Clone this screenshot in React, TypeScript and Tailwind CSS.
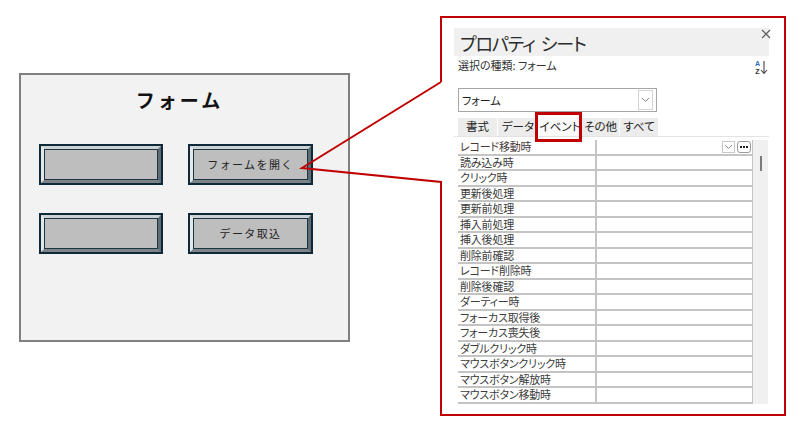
const events = [
  "レコード移動時",
  "読み込み時",
  "クリック時",
  "更新後処理",
  "更新前処理",
  "挿入前処理",
  "挿入後処理",
  "削除前確認",
  "レコード削除時",
  "削除後確認",
  "ダーティー時",
  "フォーカス取得後",
  "フォーカス喪失後",
  "ダブルクリック時",
  "マウスボタンクリック時",
  "マウスボタン解放時",
  "マウスボタン移動時",
];

const tabs = [
  { label: "書式", w: "w-[39px]" },
  { label: "データ", w: "w-[40px]" },
  { label: "イベント", w: "w-[42px]" },
  { label: "その他", w: "w-[37px]" },
  { label: "すべて", w: "w-[38px]" },
];

const Chevron = () => (
  <svg width="9" height="6" viewBox="0 0 9 6">
    <path d="M1 1 L4.5 4.5 L8 1" fill="none" stroke="#8a8a8a" strokeWidth="1" />
  </svg>
);

const BevelButton = ({ label }: { label?: string }) => (
  <div className="h-[41px] border-2 border-[#0e2a3a]">
    <div className="h-full border-[3px] border-t-[#cdd2d4] border-l-[#e6e8e8] border-r-[#5f6b70] border-b-[#7d8386]">
      <div className="h-full border border-[#1b3545] bg-[#bebebe] flex items-center justify-center text-[11px] leading-none tracking-[1.4px] text-[#222]">
        {label}
      </div>
    </div>
  </div>
);

const FormPanel = () => (
  <div className="ml-[19px] mt-[73px] w-[331px] h-[269px] border-2 border-[#808080] bg-[#f2f2f2]">
    <div className="pt-[13px] pr-[10px] h-[37px] text-center text-[19px] leading-[24px] font-bold tracking-[3px] text-[#111]">
      フォーム
    </div>
    <div className="grid grid-cols-[124px_125px] gap-x-[25px] gap-y-[28px] pl-[18px] mt-[32px]">
      <BevelButton />
      <BevelButton label="フォームを開く" />
      <BevelButton />
      <BevelButton label="データ取込" />
    </div>
  </div>
);

const PropertySheet = () => (
  <div className="relative w-[315px] h-[375px] bg-white [font-feature-settings:'palt'] whitespace-nowrap">
    {/* title */}
    <div className="h-[28px] bg-[#f0f0f0] pl-[6px] pt-[2px] flex gap-[6px] text-[18px] leading-[26px] tracking-[-1.1px] text-[#2b2b2b]">
      <span>プロパティ</span>
      <span>シート</span>
    </div>
    <svg className="absolute right-[-2px] top-[1px]" width="10" height="10" viewBox="0 0 10 10">
      <path d="M1 1 L9 9 M9 1 L1 9" stroke="#555" strokeWidth="1.1" />
    </svg>

    <div className="h-[32px] flex justify-between pl-[4px] pr-[1px] pt-[3px]">
      <span className="text-[11px] leading-[13px] text-[#333]">選択の種類: フォーム</span>
      <div className="flex items-start mt-[1px]">
        <div className="flex flex-col items-center font-['Liberation_Sans',sans-serif] text-[7px] leading-[8px] font-bold">
          <span className="text-[#2c6cc7]">A</span>
          <span className="text-[#333]">Z</span>
        </div>
        <svg width="8" height="15" viewBox="0 0 8 15">
          <path d="M4 1 L4 13 M1 10 L4 13.5 L7 10" fill="none" stroke="#444" strokeWidth="1.1" />
        </svg>
      </div>
    </div>

    {/* combo */}
    <div className="ml-[4px] w-[199px] h-[24px] border border-[#a6a6a6] flex items-center justify-between pl-[3px] pr-[3px]">
      <span className="text-[11px] leading-none text-[#222]">フォーム</span>
      <div className="w-[15px] h-[20px] border border-[#d4d4d4] flex items-center justify-center">
        <Chevron />
      </div>
    </div>

    {/* tabs */}
    <div className="mt-[6px] h-[19px] pl-[4px] flex gap-[1px] border-b border-[#e3e3e3]">
      {tabs.map((t) => (
        <div
          key={t.label}
          className={`relative ${t.w} h-[18px] flex items-center justify-center text-[11.5px] leading-none text-[#222] ${
            t.label === "イベント" ? "bg-[#fafafa]" : "bg-[#ececec]"
          }`}
        >
          {t.label}
          {t.label === "イベント" && (
            <span className="absolute -left-[4px] -top-[6px] w-[47px] h-[30px] border-[3px] border-[#c00000]" />
          )}
        </div>
      ))}
    </div>

    {/* grid */}
    <div className="mt-[3px] ml-[4px] flex">
      <div className="w-[295px] border-r border-[#c4c4c4]">
        {events.map((ev, i) => (
          <div key={ev} className="h-[15.5px] flex border-b-2 border-[#c4c4c4]">
            <div
              className={`w-[139px] border-r-2 border-[#c4c4c4] pl-[2px] text-[11px] leading-[13.5px] tracking-[-0.2px] ${
                i === 0 ? "text-[#4a3a3a]" : "text-[#3c3c3c]"
              }`}
            >
              {ev}
            </div>
            <div className="flex-1 flex items-center justify-end gap-[2px] pr-[1px]">
              {i === 0 && (
                <>
                  <div className="w-[13px] h-[12px] border border-[#c8c8c8] flex items-center justify-center bg-white">
                    <Chevron />
                  </div>
                  <div className="w-[14px] h-[12px] border border-[#9a9a9a] rounded-[3px] flex items-center justify-center gap-[1px]">
                    <span className="w-[2px] h-[2px] bg-[#222]" />
                    <span className="w-[2px] h-[2px] bg-[#222]" />
                    <span className="w-[2px] h-[2px] bg-[#222]" />
                  </div>
                </>
              )}
            </div>
          </div>
        ))}
      </div>
      <div className="w-[15px] bg-[#f0f0f0] flex justify-center pt-[16px] pl-[1px]">
        <div className="w-[2px] h-[15px] bg-[#7a7a7a]" />
      </div>
    </div>
  </div>
);

export default function App() {
  return (
    <div className="relative w-[808px] h-[429px] bg-white flex font-['Noto_Sans_CJK_JP','Noto_Sans',sans-serif]">
      <FormPanel />
      <div className="ml-[91px] mt-[16px] w-[346px] h-[400px] pl-[13px] pt-[12px]">
        <PropertySheet />
      </div>

      {/* callout frame */}
      <svg className="absolute inset-0 pointer-events-none" width="808" height="429" viewBox="0 0 808 429">
        <path
          d="M441 82 L441 17 L785 17 L785 415 L441 415 L441 182 L302 168 L441 82"
          fill="none"
          stroke="#c00000"
          strokeWidth="2"
          strokeLinejoin="miter"
        />
      </svg>
    </div>
  );
}
